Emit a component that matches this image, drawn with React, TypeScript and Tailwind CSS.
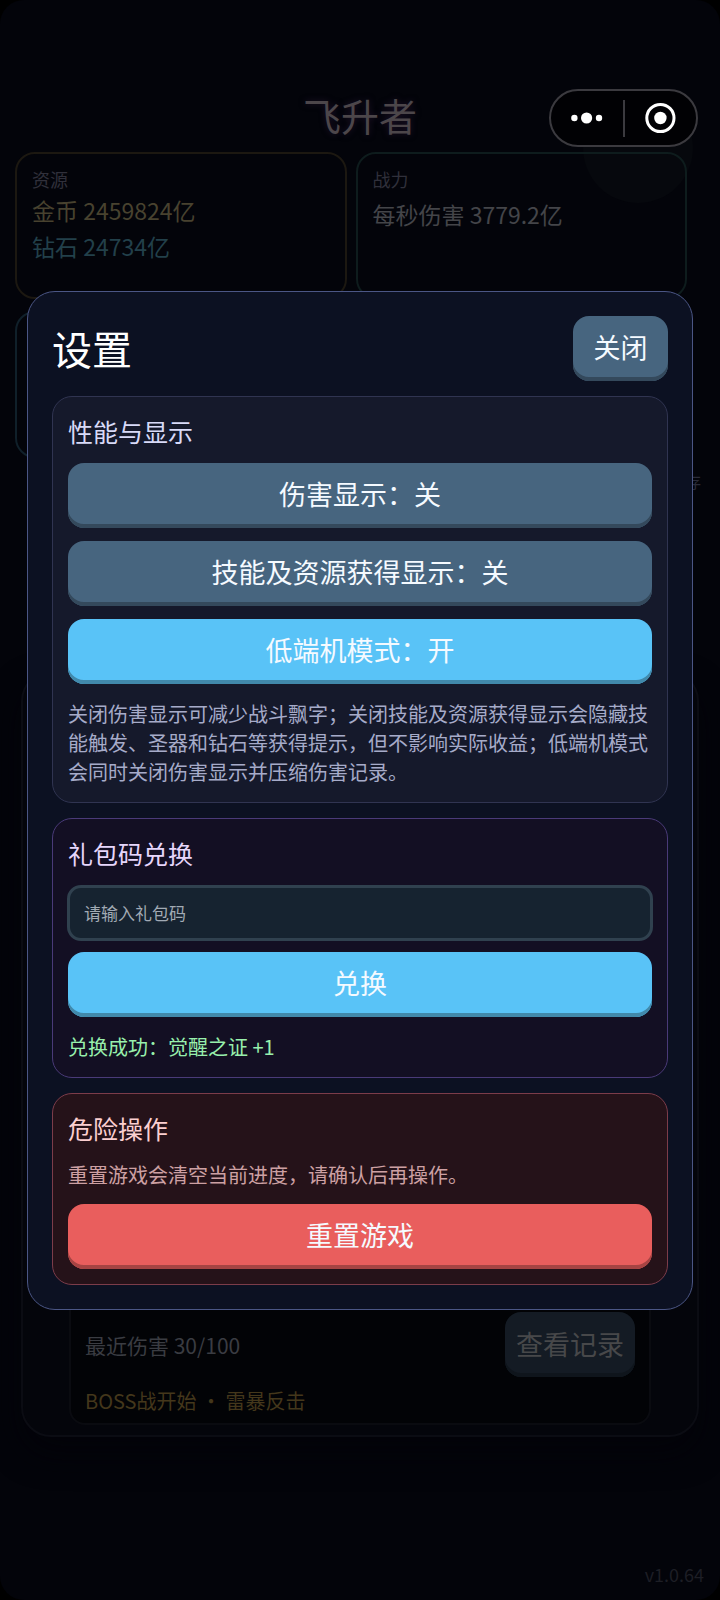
import { useState } from "react";
import type { ButtonHTMLAttributes } from "react";
import clsx from "clsx";

const tones = {
  slate: "bg-[#47657f] shadow-[inset_0_-4px_0_#34495c]",
  sky: "bg-[#59c3f7] shadow-[inset_0_-4px_0_#4189ab]",
  red: "bg-[#e95e5d] shadow-[inset_0_-4px_0_#a64443]",
  dim: "bg-[#141b24] shadow-[inset_0_-4px_0_#0f151c]",
};

type GameButtonProps = ButtonHTMLAttributes<HTMLButtonElement> & {
  tone: keyof typeof tones;
};

const GameButton = ({ tone, className, ...props }: GameButtonProps) => (
  <button
    type="button"
    className={clsx(
      "h-[65px] shrink-0 rounded-2xl pb-0.5 text-[27px] leading-10",
      tone === "dim" ? "text-[#47484a]" : "text-[#f5faff]",
      tones[tone],
      className,
    )}
    {...props}
  />
);

const Capsule = () => (
  <div className="absolute top-[89px] right-[22px] flex h-[58px] w-[149px] items-center rounded-full border-2 border-[#3b3a3f] bg-[#010104]">
    <button type="button" aria-label="更多" className="flex flex-1 items-center justify-center">
      <svg width="32" height="12" viewBox="0 0 32 12" fill="#fff">
        <circle cx="3.4" cy="6" r="3.2" />
        <circle cx="15.6" cy="6" r="5.6" />
        <circle cx="28" cy="6" r="3.2" />
      </svg>
    </button>
    <span className="h-[37px] w-0.5 bg-[#3b3a3f]" />
    <button type="button" aria-label="退出" className="flex flex-1 items-center justify-center">
      <svg width="32" height="32" viewBox="0 0 32 32" fill="none">
        <circle cx="16.4" cy="16" r="13.6" stroke="#fff" strokeWidth="3" />
        <circle cx="16.4" cy="16" r="6.2" fill="#fff" />
      </svg>
    </button>
  </div>
);

const GameScreen = () => (
  <div className="relative col-start-1 row-start-1 flex flex-col rounded-[24px] bg-[#03040a]">
    <div className="absolute top-[93px] right-[27px] size-[110px] rounded-full bg-[#06080d]" />

    <h1 className="pt-[87px] text-center text-[38px] leading-[56px] text-[#4c464a] [text-shadow:0_0_6px_#1d1128]">
      飞升者
    </h1>

    <div className="relative mt-[9px] grid grid-cols-2 gap-x-[9px] gap-y-3 pr-[33px] pl-[15px]">
      <section className="h-[147px] rounded-[20px] border-2 border-[#1c1811] px-[15px] py-3">
        <h2 className="text-lg leading-[26px] text-[#30303b]">资源</h2>
        <p className="text-[23px] leading-9 text-[#48422f]">金币 2459824亿</p>
        <p className="text-[23px] leading-9 text-[#22404a]">钻石 24734亿</p>
      </section>
      <section className="h-[147px] rounded-[20px] border-2 border-[#0e1c1d] px-[15px] py-3">
        <h2 className="text-lg leading-[26px] text-[#30303b]">战力</h2>
        <p className="mt-1 text-[23px] leading-9 text-[#444549]">每秒伤害 3779.2亿</p>
      </section>
      <section className="h-[147px] rounded-[20px] border-2 border-[#10202a]" />
    </div>

    <p className="mt-[9px] pr-[19px] text-right text-base leading-7 text-[#2a2b38]">存</p>

    <section className="mx-[21px] mt-[176px] flex flex-1 flex-col justify-end rounded-[30px] border-2 border-[#0b0c13] bg-[#04050b] px-[46px] pb-[10px] shadow-[0_16px_32px_#030309]">
      <div className="flex flex-1 flex-col justify-end rounded-2xl border-2 border-[#0a0b10] bg-[#020306] px-3.5 pb-2">
        <div className="flex items-center justify-between">
          <h2 className="text-[21px] leading-8 text-[#3a3c42]">最近伤害 30/100</h2>
          <GameButton tone="dim" className="w-[130px]">
            查看记录
          </GameButton>
        </div>
        <p className="mt-[9px] text-xl leading-[29px] text-[#44371b]">BOSS战开始 · 雷暴反击</p>
      </div>
    </section>

    <footer className="mt-[121px] px-4 pb-2.5 text-right text-lg leading-8 text-[#1d1e25]">
      v1.0.64
    </footer>
  </div>
);

const SettingsDialog = () => {
  const [showDamage, setShowDamage] = useState(false);
  const [showGains, setShowGains] = useState(false);
  const [lowEnd, setLowEnd] = useState(true);
  const [code, setCode] = useState("");

  const toggles = [
    { label: "伤害显示", on: showDamage, set: setShowDamage },
    { label: "技能及资源获得显示", on: showGains, set: setShowGains },
    { label: "低端机模式", on: lowEnd, set: setLowEnd },
  ];

  return (
    <div
      role="dialog"
      aria-labelledby="settings-title"
      className="flex w-full flex-col gap-[15px] rounded-[28px] border border-[#4b5685] bg-[#0c1122] p-6"
    >
      <header className="flex items-center justify-between">
        <h2 id="settings-title" className="text-[40px] leading-[60px] text-white">
          设置
        </h2>
        <GameButton tone="slate" className="w-[95px]">
          关闭
        </GameButton>
      </header>

      <section className="rounded-[20px] border border-[#303451] bg-[#15192b] p-[15px]">
        <h3 className="mb-[13px] text-[25px] leading-[38px] text-[#d8daf8]">性能与显示</h3>
        <div className="flex flex-col gap-[13px]">
          {toggles.map(({ label, on, set }) => (
            <GameButton
              key={label}
              tone={on ? "sky" : "slate"}
              aria-pressed={on}
              onClick={() => set(!on)}
            >
              {label}：{on ? "开" : "关"}
            </GameButton>
          ))}
        </div>
        <p className="mt-[15px] mb-px text-xl leading-[29px] text-[#a6abc9]">
          关闭伤害显示可减少战斗飘字；关闭技能及资源获得显示会隐藏技能触发、圣器和钻石等获得提示，但不影响实际收益；低端机模式会同时关闭伤害显示并压缩伤害记录。
        </p>
      </section>

      <section className="flex flex-col rounded-[20px] border border-[#4a3a78] bg-[#130f23] p-[15px]">
        <h3 className="mb-[13px] text-[25px] leading-[38px] text-[#e6d6fb]">礼包码兑换</h3>
        <input
          type="text"
          aria-label="礼包码"
          placeholder="请输入礼包码"
          value={code}
          onChange={(e) => setCode(e.target.value)}
          className="-mx-px mb-[11px] h-14 rounded-[14px] border-[3px] border-[#30414f] bg-[#162330] px-3.5 text-[17px] text-white placeholder:text-[#a1aab4]"
        />
        <GameButton tone="sky">兑换</GameButton>
        <p className="mt-[15px] mb-px text-xl leading-[29px] text-[#98f0ac]">
          兑换成功：觉醒之证 +1
        </p>
      </section>

      <section className="flex flex-col rounded-[20px] border border-[#7c3c4a] bg-[#251219] p-[15px]">
        <h3 className="mb-[13px] text-[25px] leading-[38px] text-[#fbcfd0]">危险操作</h3>
        <p className="mb-[15px] text-xl leading-[29px] text-[#cda0a3]">
          重置游戏会清空当前进度，请确认后再操作。
        </p>
        <GameButton tone="red">重置游戏</GameButton>
      </section>
    </div>
  );
};

const App = () => (
  <div className="relative grid min-h-screen bg-black font-['Noto_Sans_CJK_SC',sans-serif]">
    <GameScreen />
    <div className="relative col-start-1 row-start-1 flex items-center px-[27px]">
      <SettingsDialog />
    </div>
    <Capsule />
  </div>
);

export default App;
